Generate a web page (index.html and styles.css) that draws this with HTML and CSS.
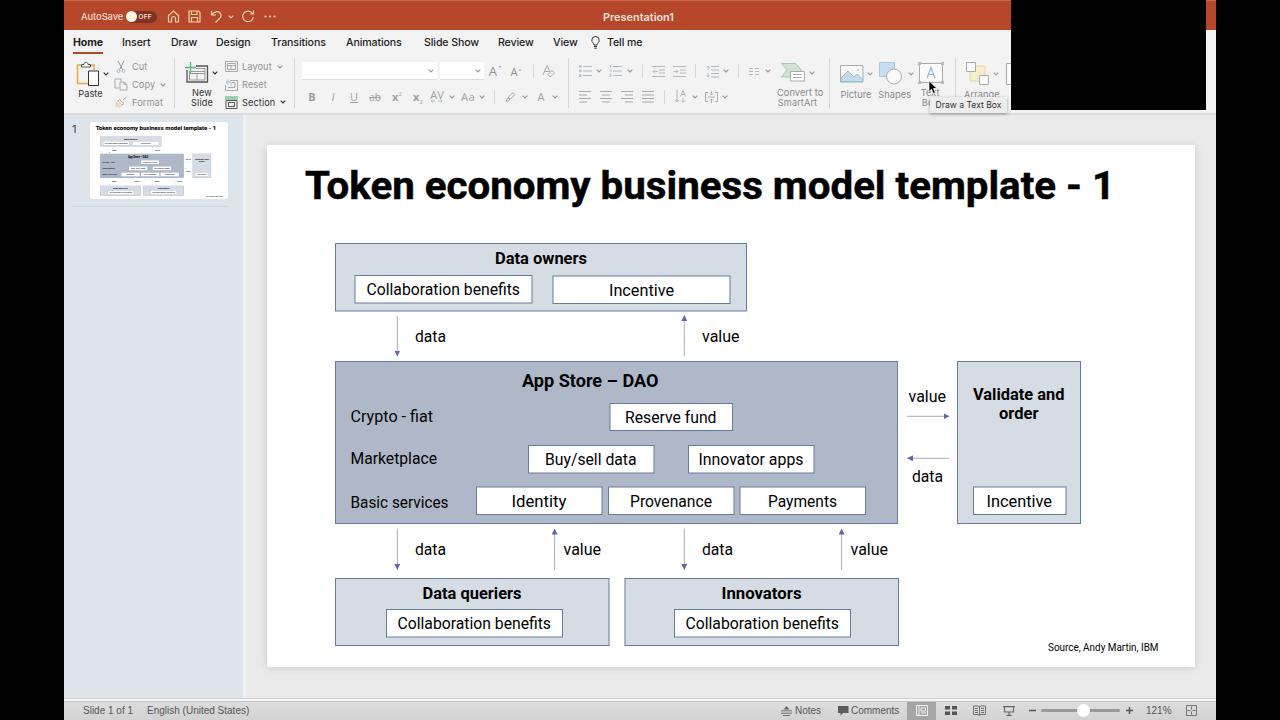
FILE: index.html
```html
<!DOCTYPE html>
<html lang="en">
<head>
    <meta charset="UTF-8">
    <meta name="viewport" content="width=device-width, initial-scale=1.0">
    <title>Presentation1</title>
    <link rel="stylesheet" href="styles.css">
</head>
<body>
    <svg class="defs" width="0" height="0">
        <symbol id="chev" viewBox="0 0 6 4"><path d="M.7.7 3 3 5.3.7" fill="none" stroke="currentColor" stroke-width="1.2"/></symbol>
        <marker id="head" viewBox="0 0 6 6" refX="5.5" refY="3" markerWidth="6" markerHeight="6" markerUnits="userSpaceOnUse" orient="auto"><path d="M0 0 6 3 0 6z" fill="#6068a8"/></marker>
    </svg>

    <div class="app">
        <header class="titlebar">
            <span class="autosave">AutoSave</span>
            <span class="switch"><i></i>OFF</span>
            <svg class="tool" width="13" height="13" viewBox="0 0 13 13"><path d="M1.5 5.5 6.5 1l5 4.5V12h-3V8.500a2 2 0 0 0-4 0V12h-3z"/></svg>
            <svg class="tool" width="13" height="13" viewBox="0 0 13 13"><path d="M1 1h9.500L12 2.500V12H1zM3.500 1v3.500H9V1M3.500 12V7.500h6V12"/></svg>
            <svg class="tool" width="13" height="13" viewBox="0 0 13 13"><path d="M1.500.8V5H6M1.800 4.800C4 1.500 8 .8 10 3c2 2.200 1 4.200-.5 5.500l-4 4"/></svg>
            <svg class="chev" width="6" height="4"><use href="#chev"/></svg>
            <svg class="tool" width="14" height="13" viewBox="0 0 14 13"><path d="M11.500 3.500A5.300 5.300 0 1 0 12.300 7M12.500.5V4H9"/></svg>
            <svg class="dots" width="12" height="3" viewBox="0 0 12 3"><circle cx="1.5" cy="1.5" r="1.1"/><circle cx="6" cy="1.5" r="1.1"/><circle cx="10.5" cy="1.5" r="1.1"/></svg>
            <span class="doc-name">Presentation1</span>
        </header>

        <nav class="tabs">
            <a class="active">Home</a>
            <a>Insert</a>
            <a>Draw</a>
            <a>Design</a>
            <a>Transitions</a>
            <a>Animations</a>
            <a>Slide Show</a>
            <a>Review</a>
            <a>View</a>
            <svg width="9" height="13" viewBox="0 0 9 13"><path d="M3 9C3 7 .8 6.500.8 4.200a3.700 3.700 0 0 1 7.400 0C8.200 6.500 6 7 6 9zM3 10.500h3M3.300 12.200h2.400" fill="none" stroke="#333" stroke-width="1"/></svg>
            <a>Tell me</a>
        </nav>

        <section class="ribbon">
            <div class="group clipboard">
                <div class="big">
                    <div class="big-icon dark">
                        <svg width="24" height="26" viewBox="0 0 24 26"><path d="M5 4H1.500v18.500H12M15 4h3v5" fill="none" stroke="#e3a844" stroke-width="1.5"/><path d="M5.500 6V3.500H8C8 .5 12 .5 12 3.500h2.500V6z" fill="#fff" stroke="#555"/><path d="M12.500 10h10v14.500h-10z" fill="#fff" stroke="#333"/></svg>
                        <svg class="chev" width="6" height="4"><use href="#chev"/></svg>
                    </div>
                    <span>Paste</span>
                </div>
                <div class="list">
                    <div><svg width="14" height="12" viewBox="0 0 14 12"><path d="M4 0 8.500 8.500M10 0 5.500 8.500" stroke="#999"/><g fill="none" stroke="#a9bccb"><circle cx="4.500" cy="10" r="1.5"/><circle cx="9.500" cy="10" r="1.5"/></g></svg><span>Cut</span></div>
                    <div><svg width="14" height="13" viewBox="0 0 14 13"><path d="M5 10H1V1h6v2M6 4h4l3 2.500V12H6zM10 4v2.500h3" fill="none" stroke="#aaa"/></svg><span>Copy</span><svg class="chev" width="6" height="4"><use href="#chev"/></svg></div>
                    <div><svg width="14" height="12" viewBox="0 0 14 12"><path d="m12.500 1-3.500 3M5.500 3.500 10 7.500 8 9 4 5z" fill="none" stroke="#aaa"/><path d="M4 5 8 9l-2 2.500L1 9.500 3.500 8 1.500 7z" fill="#f1dfc6" stroke="#d8cbb8" stroke-width=".6"/></svg><span>Format</span></div>
                </div>
            </div>

            <div class="group slides">
                <div class="big">
                    <div class="big-icon dark">
                        <svg width="24" height="24" viewBox="0 0 24 24"><path d="M2 9v12h20.500V5H11" fill="none" stroke="#555" stroke-width="1.3"/><path d="M4.500 10.500h15.500v8.500H4.500zM4.500 12.500H20M12 12.500V19M11 7.500h9v3" fill="none" stroke="#999"/><path d="M5.500 1v11M0 6.500h11" stroke="#57b87b" stroke-width="1.4"/></svg>
                        <svg class="chev" width="6" height="4"><use href="#chev"/></svg>
                    </div>
                    <span>New<br>Slide</span>
                </div>
                <div class="list">
                    <div><svg width="13" height="11" viewBox="0 0 13 11"><path d="M.5.5h12v10H.5zM2.500 2.500h8v6h-8zM2.500 4.500h8M6 4.500v4" fill="none" stroke="#aaa"/></svg><span>Layout</span><svg class="chev" width="6" height="4"><use href="#chev"/></svg></div>
                    <div><svg width="13" height="12" viewBox="0 0 13 12"><path d="M5 1.500h7.500v10H.5V6M3 8.500h7v-5H7" fill="none" stroke="#aaa"/><path d="M4 .5 1 3l3 2.500M1 3h4q2 1 1 4" fill="none" stroke="#9fc3de"/></svg><span>Reset</span></div>
                    <div class="on"><svg width="13" height="13" viewBox="0 0 13 13"><path d="M0 1h13M0 3h13" stroke="#4aa86b"/><path d="M1 4.500h11v8H1zM3.500 6.500h6v4h-6z" fill="none" stroke="#555"/></svg><span>Section</span><svg class="chev" width="6" height="4"><use href="#chev"/></svg></div>
                </div>
            </div>

            <div class="group font">
                <div class="font-fields">
                    <div class="field"><svg class="chev" width="6" height="4"><use href="#chev"/></svg></div>
                    <div class="field"><svg class="chev" width="6" height="4"><use href="#chev"/></svg></div>
                    <span class="grow">A<sup>⌃</sup></span>
                    <span class="shrink">A<sup>⌄</sup></span>
                    <i class="sep"></i>
                    <svg width="14" height="14" viewBox="0 0 14 14"><path d="M1 11 5 1.500 8 8M2.500 7.500H7M6 10.500l4-4L12.500 9 9 12.500H7.500z" fill="none" stroke="#aaa"/></svg>
                </div>
                <div class="font-styles">
                    <b>B</b>
                    <em>I</em>
                    <u>U</u>
                    <s>ab</s>
                    <span><b>x</b><sup>2</sup></span>
                    <span><b>x</b><sub>2</sub></span>
                    <span class="spacing">AV<svg width="13" height="4" viewBox="0 0 13 4"><path d="M1 2h4M8 2h4M2.500.5 1 2l1.500 1.500M10.500.5 12 2l-1.500 1.500" fill="none" stroke="#a5bccc" stroke-width=".9"/></svg></span>
                    <svg class="chev" width="6" height="4"><use href="#chev"/></svg>
                    <span class="case">Aa</span>
                    <svg class="chev" width="6" height="4"><use href="#chev"/></svg>
                    <i class="sep"></i>
                    <svg width="11" height="10" viewBox="0 0 11 10"><path d="M3 5.500 8 .7l2 2-5 4.500zM3 5.500 1 9h2.500L5 7.200z" fill="none" stroke="#aaa"/></svg>
                    <svg class="chev" width="6" height="4"><use href="#chev"/></svg>
                    <span>A</span>
                    <svg class="chev" width="6" height="4"><use href="#chev"/></svg>
                </div>
            </div>

            <div class="group para">
                <div class="para-lists">
                    <svg width="13" height="12" viewBox="0 0 13 12"><path d="M4 1.500h9M4 6h9M4 10.500h9" stroke="#b8b8b8"/><path d="M0 1.500h2.500M0 6h2.500M0 10.500h2.500" stroke="#a9c6da" stroke-width="2.4"/></svg>
                    <svg class="chev" width="6" height="4"><use href="#chev"/></svg>
                    <svg width="13" height="12" viewBox="0 0 13 12"><path d="M4 1.500h9M4 6h9M4 10.500h9" stroke="#b8b8b8"/><path d="M1.500 0v3M.5 4.800H2v2M.5 9H2v2.500H.5" fill="none" stroke="#a9c6da"/></svg>
                    <svg class="chev" width="6" height="4"><use href="#chev"/></svg>
                    <i class="sep"></i>
                    <svg width="13" height="11" viewBox="0 0 13 11"><path d="M0 .5h13M7 4h6M7 7h6M0 10.500h13" stroke="#b8b8b8"/><path d="M6 5.500H1M3 3.500l-2 2 2 2" fill="none" stroke="#a9c6da"/></svg>
                    <svg width="13" height="11" viewBox="0 0 13 11"><path d="M0 .5h13M7 4h6M7 7h6M0 10.500h13" stroke="#b8b8b8"/><path d="M0 5.500h5M3 3.500l2 2-2 2" fill="none" stroke="#a9c6da"/></svg>
                    <i class="sep"></i>
                    <svg width="13" height="13" viewBox="0 0 13 13"><path d="M5 1.500h8M5 5h8M5 8.500h8M5 12h8" stroke="#b8b8b8"/><path d="M2 1v4M2 8v4M.3 3 2 1l1.700 2M.3 10 2 12l1.700-2" fill="none" stroke="#a9c6da"/></svg>
                    <svg class="chev" width="6" height="4"><use href="#chev"/></svg>
                    <i class="sep"></i>
                    <svg width="10" height="7" viewBox="0 0 10 7"><path d="M0 .5h4M0 3.500h4M0 6.500h4M6 .5h4M6 3.500h4M6 6.500h4" stroke="#b4bcc4"/></svg>
                    <svg class="chev" width="6" height="4"><use href="#chev"/></svg>
                </div>
                <div class="para-align">
                    <svg width="12" height="12" viewBox="0 0 12 12"><path d="M0 .5h12M0 4h8M0 7.500h12M0 11h8" stroke="#aaa"/></svg>
                    <svg width="12" height="12" viewBox="0 0 12 12"><path d="M0 .5h12M2 4h8M0 7.500h12M2 11h8" stroke="#aaa"/></svg>
                    <svg width="12" height="12" viewBox="0 0 12 12"><path d="M0 .5h12M4 4h8M0 7.500h12M4 11h8" stroke="#aaa"/></svg>
                    <svg width="12" height="12" viewBox="0 0 12 12"><path d="M0 .5h12M0 4h12M0 7.500h12M0 11h12" stroke="#aaa"/></svg>
                    <i class="sep"></i>
                    <svg width="11" height="13" viewBox="0 0 11 13"><path d="M2 0v12M0 10l2 2 2-2M8 8v4M6 10.500l2 2 2-2M5.500 6.500 8 .5l2.500 6M6.500 4.500h3" fill="none" stroke="#b4b4b4"/></svg>
                    <svg class="chev" width="6" height="4"><use href="#chev"/></svg>
                    <svg width="13" height="12" viewBox="0 0 13 12"><path d="M3 1.500H.5v9H3M10 1.500h2.500v9H10M6.500 0v4M6.500 8v4M3 6h7M5 2.500 6.500 4 8 2.500M5 9.500 6.500 8 8 9.500" fill="none" stroke="#b0b0b0"/></svg>
                    <svg class="chev" width="6" height="4"><use href="#chev"/></svg>
                </div>
            </div>

            <div class="group smartart">
                <div class="big">
                    <div class="big-icon">
                        <svg width="24" height="19" viewBox="0 0 24 19"><path d="M.5.5h14l6 6.500-3 7H.5L6 7z" fill="#cfe3d4" stroke="#a9c9b1"/><path d="M9.500 8.500h14V18h-14z" fill="#fff" stroke="#aaa"/><path d="M12 11.500h9M12 14.500h9" stroke="#aaa"/></svg>
                        <svg class="chev" width="6" height="4"><use href="#chev"/></svg>
                    </div>
                    <span>Convert to<br>SmartArt</span>
                </div>
            </div>

            <div class="group insert">
                <div class="big">
                    <div class="big-icon">
                        <svg width="24" height="18" viewBox="0 0 24 18"><path d="M.5.5H23V17H.5z" fill="#f8f8f8" stroke="#aaa"/><path d="M1 13 8 6l6 6 3-3 5.500 5v2.500H1z" fill="#c2dbef" stroke="#9cbdd8"/><circle cx="18" cy="5" r="1" fill="#b8cddd"/></svg>
                        <svg class="chev" width="6" height="4"><use href="#chev"/></svg>
                    </div>
                    <span>Picture</span>
                </div>
                <div class="big">
                    <div class="big-icon">
                        <svg width="24" height="23" viewBox="0 0 24 23"><path d="M.5.5h15v14H.5z" fill="#c9def0" stroke="#a9c6df"/><circle cx="15" cy="14.500" r="7.500" fill="#fafafa" stroke="#aaa"/></svg>
                        <svg class="chev" width="6" height="4"><use href="#chev"/></svg>
                    </div>
                    <span>Shapes</span>
                </div>
                <div class="big">
                    <div class="big-icon">
                        <svg width="26" height="22" viewBox="0 0 26 22"><path d="M1.500 1.500h23v19h-23z" fill="#fafafa" stroke="#aaa"/><path d="M0 0h3v3H0zM23 0h3v3h-3zM0 19h3v3H0zM23 19h3v3h-3z" fill="#bbb"/><path d="M9 16 13 5.500 17 16M10.500 12.500h5" fill="none" stroke="#8ebbdd" stroke-width="1.2"/></svg>
                    </div>
                    <span>Text<br>Box</span>
                </div>
            </div>

            <div class="group arrange">
                <div class="big">
                    <div class="big-icon">
                        <svg width="24" height="23" viewBox="0 0 24 23"><path d="M4 4h15v15H4z" fill="#f5eccb" stroke="#e6d9a8"/><path d="M.5.5h9v9h-9zM13.500 13.500h9v9h-9z" fill="#fafafa" stroke="#aaa"/></svg>
                        <svg class="chev" width="6" height="4"><use href="#chev"/></svg>
                    </div>
                    <span>Arrange</span>
                </div>
                <div class="big">
                    <div class="big-icon"><svg width="20" height="22" viewBox="0 0 20 22"><path d="M.5.5h19v21H.5z" fill="#fafafa" stroke="#aaa"/></svg></div>
                </div>
            </div>
        </section>

        <main class="workspace">
            <aside class="thumbs">
                <div class="thumb-row">
                    <span>1</span>
                    <svg class="thumb" width="138" height="77" viewBox="267 145 928 522" preserveAspectRatio="none"><use href="#slide"/></svg>
                </div>
            </aside>
            <div class="canvas">
                <svg class="slide" width="928" height="522" viewBox="267 145 928 522">
                    <g id="slide">
                        <rect x="267" y="145" width="928" height="522" fill="#fff"/>
                        <text class="s-title" x="305" y="198.5" textLength="810" lengthAdjust="spacingAndGlyphs">Token economy business model template - 1</text>

                        <g class="panel">
                            <rect x="335.5" y="243.5" width="411" height="67.5"/>
                            <rect class="main" x="335.5" y="361.5" width="562" height="162"/>
                            <rect x="957.5" y="361.5" width="123" height="162"/>
                            <rect x="335.5" y="578.5" width="273.5" height="67"/>
                            <rect x="625" y="578.5" width="273.5" height="67"/>
                        </g>
                        <g class="box">
                            <rect x="355" y="275.5" width="177" height="27.5"/>
                            <rect x="553" y="276" width="177" height="27.5"/>
                            <rect x="610" y="403.5" width="122.5" height="27"/>
                            <rect x="528.5" y="445.5" width="125.5" height="27.5"/>
                            <rect x="688.5" y="445.5" width="125.5" height="27.5"/>
                            <rect x="476.5" y="487" width="125.5" height="27.5"/>
                            <rect x="608.5" y="487" width="125.5" height="27.5"/>
                            <rect x="740" y="487" width="125.5" height="27.5"/>
                            <rect x="973.5" y="487" width="92.5" height="27.5"/>
                            <rect x="386.5" y="609.5" width="176" height="27.5"/>
                            <rect x="674.5" y="609.5" width="176" height="27.5"/>
                        </g>
                        <g class="arrow">
                            <path d="M397.3 316V356"/>
                            <path d="M684.3 356V315.5"/>
                            <path d="M907 416.3H949"/>
                            <path d="M949 458.3H907.5"/>
                            <path d="M397.3 528.5V569.5"/>
                            <path d="M554.6 570V529"/>
                            <path d="M684.3 528.5V569.5"/>
                            <path d="M841.6 570V529"/>
                        </g>

                        <g class="s-head">
                            <text x="495" y="263.9" textLength="92" lengthAdjust="spacingAndGlyphs">Data owners</text>
                            <text class="large" x="522" y="386.9" textLength="136.5" lengthAdjust="spacingAndGlyphs">App Store – DAO</text>
                            <text x="973" y="400" textLength="91.5" lengthAdjust="spacingAndGlyphs">Validate and</text>
                            <text x="999" y="419" textLength="39.5" lengthAdjust="spacingAndGlyphs">order</text>
                            <text x="422.5" y="598.8" textLength="99" lengthAdjust="spacingAndGlyphs">Data queriers</text>
                            <text x="721.5" y="598.8" textLength="80" lengthAdjust="spacingAndGlyphs">Innovators</text>
                        </g>
                        <g class="s-text">
                            <text x="366.5" y="294.6" textLength="153.5" lengthAdjust="spacingAndGlyphs">Collaboration benefits</text>
                            <text x="609" y="295.6" textLength="65" lengthAdjust="spacingAndGlyphs">Incentive</text>
                            <text x="415" y="341.6" textLength="31" lengthAdjust="spacingAndGlyphs">data</text>
                            <text x="702" y="341.6" textLength="37.5" lengthAdjust="spacingAndGlyphs">value</text>
                            <text x="350.5" y="421.6" textLength="82.5" lengthAdjust="spacingAndGlyphs">Crypto - fiat</text>
                            <text x="350.5" y="463.6" textLength="86.5" lengthAdjust="spacingAndGlyphs">Marketplace</text>
                            <text x="350.5" y="507.6" textLength="98" lengthAdjust="spacingAndGlyphs">Basic services</text>
                            <text x="625" y="422.8" textLength="91.5" lengthAdjust="spacingAndGlyphs">Reserve fund</text>
                            <text x="545" y="464.6" textLength="91.5" lengthAdjust="spacingAndGlyphs">Buy/sell data</text>
                            <text x="698.5" y="464.6" textLength="105" lengthAdjust="spacingAndGlyphs">Innovator apps</text>
                            <text x="511.5" y="506.6" textLength="55" lengthAdjust="spacingAndGlyphs">Identity</text>
                            <text x="630" y="506.6" textLength="82" lengthAdjust="spacingAndGlyphs">Provenance</text>
                            <text x="768" y="506.6" textLength="69" lengthAdjust="spacingAndGlyphs">Payments</text>
                            <text x="908.5" y="402" textLength="37.5" lengthAdjust="spacingAndGlyphs">value</text>
                            <text x="912" y="481.5" textLength="31" lengthAdjust="spacingAndGlyphs">data</text>
                            <text x="986.5" y="506.6" textLength="65.5" lengthAdjust="spacingAndGlyphs">Incentive</text>
                            <text x="415" y="554.6" textLength="31" lengthAdjust="spacingAndGlyphs">data</text>
                            <text x="563.5" y="554.6" textLength="37.5" lengthAdjust="spacingAndGlyphs">value</text>
                            <text x="702" y="554.6" textLength="31" lengthAdjust="spacingAndGlyphs">data</text>
                            <text x="850.5" y="554.6" textLength="37.5" lengthAdjust="spacingAndGlyphs">value</text>
                            <text x="397.5" y="628.8" textLength="153.5" lengthAdjust="spacingAndGlyphs">Collaboration benefits</text>
                            <text x="685.5" y="628.8" textLength="153.5" lengthAdjust="spacingAndGlyphs">Collaboration benefits</text>
                            <text class="source" x="1048" y="651.3" textLength="110.5" lengthAdjust="spacingAndGlyphs">Source, Andy Martin, IBM</text>
                        </g>
                    </g>
                </svg>
            </div>
        </main>

        <footer class="status">
            <span>Slide 1 of 1</span>
            <span>English (United States)</span>
            <svg width="11" height="10" viewBox="0 0 11 10"><path d="M5.500 0 8.500 3.500h-6z" fill="#666"/><path d="M0 4.800h11M0 7.200h11M2 9.500h7" stroke="#666" stroke-width=".9"/></svg>
            <span>Notes</span>
            <svg width="11" height="10" viewBox="0 0 11 10"><path d="M0 0h10.500v7H5L2.500 9.500V7H0z" fill="#5c5c5c"/></svg>
            <span>Comments</span>
            <div class="view-on"><svg width="12" height="11" viewBox="0 0 12 11"><path d="M.5.5h11v10H.5zM3 .5v10M5 3h4.500v3H5zM5 8h5" fill="none" stroke="#f4f4f4"/></svg></div>
            <svg width="12" height="9" viewBox="0 0 12 9"><path d="M0 0h5v3.500H0zM7 0h5v3.500H7zM0 5.500h5V9H0zM7 5.500h5V9H7z" fill="#555"/></svg>
            <svg width="13" height="11" viewBox="0 0 13 11"><path d="M6.500 1.500v9M.5 1H5l1.500.7L8 1h4.500v8.500H8l-1.500.8L5 9.500H.5zM2 3.500h3M2 5.500h3M2 7.500h3M8 3.500h3M8 5.500h3M8 7.500h3" fill="none" stroke="#666" stroke-width=".9"/></svg>
            <svg width="12" height="10" viewBox="0 0 12 10"><path d="M0 .6h12M1.500 1v5h9V1M6 6v3M3.500 9.400h5" fill="none" stroke="#666" stroke-width="1.1"/></svg>
            <svg width="7" height="7" viewBox="0 0 7 7"><path d="M0 3.500h7" stroke="#555" stroke-width="1.5"/></svg>
            <div class="slider"><i></i></div>
            <svg width="7" height="7" viewBox="0 0 7 7"><path d="M0 3.500h7M3.500 0v7" stroke="#555" stroke-width="1.5"/></svg>
            <span>121%</span>
            <svg width="11" height="11" viewBox="0 0 11 11"><path d="M.5.5h10v10H.5zM5.500 1.500v3M5.500 6.500v3M1.500 5.500h3M6.500 5.500h3" fill="none" stroke="#666" stroke-width=".9"/></svg>
        </footer>
    </div>

    <div class="tooltip">Draw a Text Box</div>
    <svg class="cursor" width="10" height="15" viewBox="0 0 10 15"><path d="M1 .8v10.700l2.500-2.200 1.800 4.200 2-.8-1.800-4.200H9z" fill="#000" stroke="#fff" stroke-width=".7"/></svg>
    <div class="camera"></div>
</body>
</html>
```

FILE: styles.css
```css
:root {
    --accent: #b7472a;
    --muted: #929292;
    --line: #d6d6d6;
    --ui: Inter, "Liberation Sans", sans-serif;
}

* {
    box-sizing: border-box;
}

body {
    margin: 0;
    height: 720px;
    overflow: hidden;
    background: #000;
    font-family: var(--ui);
    position: relative;
}

svg {
    display: block;
    flex: none;
}

.defs {
    position: absolute;
}

.app {
    width: 1152px;
    height: 720px;
    margin: 0 auto;
    display: flex;
    flex-direction: column;
    background: #f4f3f3;
}

/* title bar */
.titlebar {
    height: 30px;
    padding: 2px 0 0 17px;
    display: grid;
    grid-template-columns: 45px 41px 21px 22px 18px 13px 23px 339px 80px;
    align-items: center;
    background: var(--accent);
    border-top: 1px solid #c66a50;
    color: #f9d9c9;
    white-space: nowrap;
}

.autosave {
    font-size: 9.4px;
    font-weight: 500;
    letter-spacing: -0.1px;
}

.switch {
    width: 31px;
    height: 12px;
    padding-right: 5px;
    display: flex;
    align-items: center;
    justify-content: space-between;
    border-radius: 6px;
    background: #7d3423;
    font-size: 6.5px;
    font-weight: 600;
    letter-spacing: 0.3px;
}

.switch i {
    width: 11px;
    height: 11px;
    border-radius: 50%;
    background: #fff5e8;
}

.tool {
    fill: none;
    stroke: #fbd3ae;
    stroke-width: 1.2;
}

.dots {
    fill: #fbd3ae;
}

.doc-name {
    font-size: 10.9px;
    font-weight: 600;
    color: #fbe3da;
}

/* tabs */
.tabs {
    height: 25px;
    padding-left: 9px;
    display: grid;
    grid-template-columns: 49px 49px 45px 55px 75px 78px 74px 55px 38px 16px 50px;
    align-items: center;
    font-size: 10.6px;
    font-weight: 500;
    letter-spacing: -0.1px;
    color: #222;
    white-space: nowrap;
}

.tabs a {
    height: 22px;
    line-height: 21px;
    justify-self: start;
}

.tabs .active {
    font-weight: 700;
    border-bottom: 2px solid var(--accent);
}

/* ribbon */
.ribbon {
    height: 60px;
    display: flex;
    border-bottom: 2px solid #dadada;
    font-size: 9.2px;
    letter-spacing: 0.1px;
    color: var(--muted);
    white-space: nowrap;
}

.chev {
    color: #9a9a9a;
}

.titlebar .chev {
    color: #fbd3ae;
}

.dark .chev,
.on .chev {
    color: #333;
}

.group {
    height: 50px;
    margin-top: 3px;
    border-right: 1px solid var(--line);
    display: flex;
    flex: none;
}

.big {
    display: flex;
    flex-direction: column;
    text-align: center;
    line-height: 10px;
}

.big-icon {
    height: 31px;
    display: flex;
    align-items: center;
    gap: 3px;
}

.list {
    display: grid;
    grid-template-rows: repeat(3, 17.7px);
}

.list div {
    display: flex;
    align-items: center;
}

.list span {
    margin: 0 5px 0 4px;
}

.on,
.clipboard .big,
.slides .big {
    color: #333;
}

.clipboard {
    width: 111px;
    padding-left: 12px;
}

.clipboard .big {
    width: 38px;
}

.clipboard .big > span {
    width: 29px;
}

.clipboard .big-icon {
    gap: 3px;
}

.slides {
    width: 120px;
    padding-left: 10px;
}

.slides .big {
    width: 40px;
}

.slides .big > span {
    width: 34px;
    padding-top: 1px;
}

.font {
    width: 274px;
    padding: 3px 0 0 7px;
    display: grid;
    grid-template-rows: 20px 31px;
}

.font-fields,
.font-styles,
.para-lists,
.para-align {
    display: grid;
    align-items: center;
    justify-items: center;
}

.font-fields {
    grid-template-columns: 135px 3px 44px 24px 18px 14px 18px;
}

.field {
    width: 100%;
    height: 18px;
    padding-right: 3px;
    display: flex;
    align-items: center;
    justify-content: flex-end;
    background: #fff;
    border-bottom: 1px solid #ddd;
}

.field:nth-child(2) {
    grid-column: 3;
}

.grow,
.shrink {
    font-size: 13px;
    font-family: "Open Sans", sans-serif;
}

.shrink {
    font-size: 11px;
}

.grow sup,
.shrink sup {
    font-size: 7px;
    line-height: 0;
}

.sep {
    width: 1px;
    height: 14px;
    background: var(--line);
}

.font-styles {
    grid-template-columns: 22px 20px 22px 20px 24px 18px 20px 10px 22px 6px 18px 14px 15px 18px 10px;
    margin-left: -1px;
    font-family: "Open Sans", sans-serif;
    font-size: 11px;
    letter-spacing: 0;
    color: #a0a0a0;
}

.font-styles sup,
.font-styles sub {
    font-size: 6px;
    line-height: 0;
}

.font-styles s {
    font-size: 10px;
}

.spacing {
    line-height: 9px;
}

.case {
    letter-spacing: 0.5px;
}

.para {
    width: 208px;
    padding: 3px 0 0 8px;
    border-right: 0;
    display: grid;
    grid-template-rows: 20px 31px;
}

.para-lists {
    grid-template-columns: 16px 12px 20px 10px 14px 18px 24px 8px 26px 2px 22px 10px 18px;
}

.para-align {
    grid-template-columns: 16px 26px 16px 26px 7px 24px 6px 26px 2px;
}

.smartart {
    width: 53px;
}

.smartart .big {
    width: 41px;
}

.smartart .big-icon {
    padding-left: 4px;
    gap: 4px;
}

.insert {
    width: 126px;
    padding-left: 10px;
}

.insert .big {
    width: 40px;
}

.insert .big > span {
    width: 32px;
}

.insert .big:nth-child(2) .big-icon {
    margin-left: 1px;
    gap: 5px;
}

.insert .big:last-child > span {
    width: 25px;
    margin-left: 1px;
}

.insert .big:last-child .big-icon {
    margin-left: 1px;
}

.arrange {
    padding-left: 10px;
    border-right: 0;
}

.arrange .big {
    width: 40px;
}

.arrange .big > span {
    width: 32px;
    margin-left: -2px;
}

.smartart .big > span,
.insert .big > span,
.arrange .big > span {
    padding-top: 1px;
    color: #8a8a8a;
}

/* slide panel and canvas */
.workspace {
    flex: 1;
    min-height: 0;
    display: flex;
    background: #eaeaea;
}

.thumbs {
    width: 182px;
    padding-top: 7px;
    background: #dde5ea;
    border-right: 3px solid #f0f1f2;
}

.thumb-row {
    display: flex;
    margin-left: 8px;
    padding-bottom: 7px;
    width: 156px;
    border-bottom: 1px solid #cfd7dd;
    font-size: 11px;
    color: #444;
}

.thumb-row span {
    width: 18px;
}

.thumb {
    border-radius: 3px;
}

.canvas {
    padding: 30px 0 0 21px;
}

.slide {
    box-shadow: 0 1px 8px rgba(0, 0, 0, 0.13);
}

.s-title,
.s-head,
.s-text {
    font-family: Roboto, "Open Sans", sans-serif;
    fill: #000;
}

.s-title {
    font-size: 39px;
    font-weight: 700;
    stroke: #000;
    stroke-width: 0.5;
}

.s-head {
    font-size: 15.8px;
    font-weight: 700;
}

.s-head .large {
    font-size: 18px;
}

.s-text {
    font-size: 16px;
}

.s-text .source {
    font-size: 10px;
}

.panel {
    fill: #d6dce4;
    stroke: #657ca0;
}

.panel .main {
    fill: #afb8c8;
}

.box {
    fill: #fff;
    stroke: #657ca0;
}

.arrow {
    stroke: #8d97b8;
    stroke-width: 0.8;
}

.arrow path {
    marker-end: url(#head);
}

/* status bar */
.status {
    height: 21px;
    padding-left: 19px;
    display: grid;
    grid-template-columns: 64px 634px 14px 43px 13px 56px 38px 28px 30px 26px 12px 85px 20px 40px 11px;
    align-items: center;
    background: linear-gradient(#dedede, #d2d2d2);
    border-top: 2px solid #f7f7f7;
    box-shadow: 0 -1px #d0d0d0, inset 0 1px #c2c2c2;
    font-family: "Liberation Sans", Arial, sans-serif;
    font-size: 10px;
    color: #555;
    white-space: nowrap;
}

.view-on {
    width: 29px;
    height: 18px;
    padding-left: 1px;
    display: flex;
    align-items: center;
    justify-content: center;
    background: #a5a5a5;
}

.slider {
    width: 79px;
    height: 3px;
    background: #999;
    border-radius: 2px;
    display: flex;
    align-items: center;
    justify-content: center;
}

.slider i {
    width: 13px;
    height: 13px;
    margin-left: 5px;
    border-radius: 50%;
    background: #fff;
}

/* overlays */
.tooltip {
    position: absolute;
    left: 930px;
    top: 97px;
    width: 77px;
    height: 16px;
    line-height: 16px;
    text-align: center;
    font-size: 8.6px;
    color: #333;
    background: #ededed;
    box-shadow: 0 1px 3px rgba(0, 0, 0, 0.35);
    white-space: nowrap;
}

.cursor {
    position: absolute;
    left: 928px;
    top: 80px;
}

.camera {
    position: absolute;
    left: 1011px;
    top: 0;
    width: 195px;
    height: 110px;
    background: #000;
}
```
